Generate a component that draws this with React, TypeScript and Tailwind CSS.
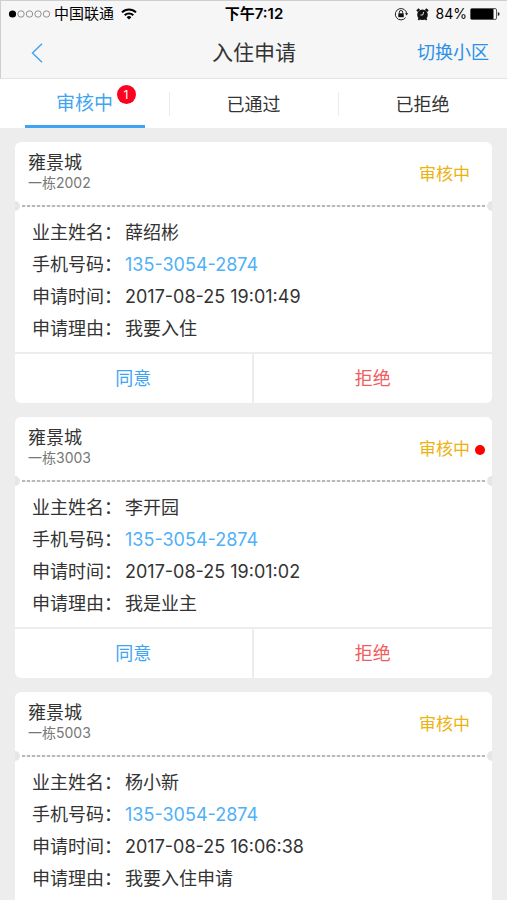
import React, { useState } from "react"

interface Application {
  id: number
  community: string
  room: string
  name: string
  phone: string
  time: string
  reason: string
  unread?: boolean
}

const tabs = [
  { id: "pending", name: "审核中", count: 1 },
  { id: "passed", name: "已通过", count: 0 },
  { id: "rejected", name: "已拒绝", count: 0 }
]

const applications: Application[] = [
  {
    id: 1,
    community: "雍景城",
    room: "一栋2002",
    name: "薛绍彬",
    phone: "135-3054-2874",
    time: "2017-08-25 19:01:49",
    reason: "我要入住"
  },
  {
    id: 2,
    community: "雍景城",
    room: "一栋3003",
    name: "李开园",
    phone: "135-3054-2874",
    time: "2017-08-25 19:01:02",
    reason: "我是业主",
    unread: true
  },
  {
    id: 3,
    community: "雍景城",
    room: "一栋5003",
    name: "杨小新",
    phone: "135-3054-2874",
    time: "2017-08-25 16:06:38",
    reason: "我要入住申请"
  }
]

// 手机状态栏
const StatusBar: React.FC = () => (
  <div className="grid h-[26px] grid-cols-[1fr_auto_1fr] items-center px-[7px] text-[15px] leading-5 text-black">
    <div className="flex items-center">
      <svg width="43" height="10" viewBox="0 0 43 10" className="mr-[3px]">
        <circle cx="4.5" cy="5" r="3.6" fill="#000" />
        {[13, 21.5, 30, 38.5].map((cx) => (
          <circle key={cx} cx={cx} cy="5" r="3.2" fill="none" stroke="#777" strokeWidth="0.8" />
        ))}
      </svg>
      <span>中国联通</span>
      <svg width="16" height="12" viewBox="0 0 16 12" className="ml-[7px]" fill="none" stroke="#000" strokeWidth="2">
        <path d="M1 4.4a10 10 0 0 1 14 0" />
        <path d="M3.7 7.2a6.1 6.1 0 0 1 8.6 0" />
        <path d="M8 11.6 5.6 9.2a3.4 3.4 0 0 1 4.8 0z" fill="#000" stroke="none" />
      </svg>
    </div>
    <span className="font-semibold">下午7:12</span>
    <div className="flex items-center justify-end text-[14px]">
      {/* 方向锁定 */}
      <svg width="14" height="14" viewBox="0 0 14 14" className="mr-2" fill="none" stroke="#222">
        <path d="M11.6 10.6A5.7 5.7 0 1 1 12.7 7" strokeWidth="1" />
        <path d="M11 6.3h3.2l-1.6 2.2z" fill="#222" stroke="none" />
        <rect x="4.3" y="6.3" width="5.4" height="3.9" fill="#111" stroke="none" />
        <path d="M5.3 6.5V5.2a1.7 1.7 0 0 1 3.4 0v1.3" strokeWidth="1" />
      </svg>
      {/* 闹钟 */}
      <svg width="13" height="13" viewBox="0 0 13 13" className="mr-[7px]">
        <circle cx="6.5" cy="6.8" r="5.3" fill="#111" />
        <path d="M1 3.2 3.4 1.2M12 3.2 9.6 1.2" stroke="#111" strokeWidth="2.2" />
        <path d="M3.4 10.6 2.4 12M9.6 10.6l1 1.4" stroke="#111" strokeWidth="1.8" />
        <path d="M7.6 3.9 6.8 7H4.4" stroke="#eee" strokeWidth="0.9" fill="none" />
      </svg>
      <span>84%</span>
      <svg width="30" height="12" viewBox="0 0 30 12" className="ml-[3px]">
        <rect x="0.5" y="0.5" width="26" height="11" rx="1.5" fill="none" stroke="#333" strokeWidth="0.8" />
        <rect x="1" y="1" width="22.5" height="10" fill="#000" />
        <path d="M27.8 4v4q1.8-.6 1.8-2t-1.8-2z" fill="#222" />
      </svg>
    </div>
  </div>
)

const Row: React.FC<{ label: string; children: React.ReactNode }> = ({ label, children }) => (
  <div className="flex gap-[3px]">
    <dt>{label}：</dt>
    <dd>{children}</dd>
  </div>
)

const ApplicationCard: React.FC<{ item: Application }> = ({ item }) => (
  <article className="shrink-0 overflow-hidden rounded-md bg-white">
    <div className="flex h-[63px] items-center justify-between pl-[13px]">
      <div className="pb-[6px]">
        <h2 className="text-[18px] leading-6">{item.community}</h2>
        <p className="text-[14px] leading-4 text-[#777]">{item.room}</p>
      </div>
      <div className="flex items-center pt-[3px] text-[17px] text-[#ecb210]">
        <span>审核中</span>
        <span className="flex w-[22px] justify-center pr-[2px]">
          {item.unread && (
            <span role="img" aria-label="未读" className="size-[10px] rounded-full bg-[#ff0000]" />
          )}
        </span>
      </div>
    </div>

    {/* 票据分割线 */}
    <div className="flex h-[2px] items-center justify-between">
      <span className="-ml-[5px] size-[10px] shrink-0 rounded-full bg-[#e6e6e6]" />
      <span className="mx-[2px] h-[2px] flex-1 bg-[repeating-linear-gradient(90deg,#b8b8b8_0_3px,#f2f2f2_3px_5px)]" />
      <span className="-mr-[5px] size-[10px] shrink-0 rounded-full bg-[#e6e6e6]" />
    </div>

    <dl className="px-[17px] pt-[10px] pb-[7px] text-[18px] leading-8">
      <Row label="业主姓名">{item.name}</Row>
      <Row label="手机号码">
        <a href={`tel:${item.phone}`} className="text-[#4fb0f8]">
          {item.phone}
        </a>
      </Row>
      <Row label="申请时间">
        <time>{item.time}</time>
      </Row>
      <Row label="申请理由">{item.reason}</Row>
    </dl>

    <div className="grid grid-cols-2 divide-x-2 divide-[#ededed] border-t-2 border-[#ededed] text-[18px]">
      <button type="button" className="h-[49px] text-[#3fa5f2]">
        同意
      </button>
      <button type="button" className="h-[49px] text-[#f05c5f]">
        拒绝
      </button>
    </div>
  </article>
)

const App: React.FC = () => {
  const [activeTab, setActiveTab] = useState("pending")

  return (
    <div className="flex h-screen flex-col bg-[#ededed] font-[Inter,'Noto_Sans_CJK_SC',sans-serif] text-[#333]">
      <header className="border-t border-l border-b border-t-[#cfcfcf] border-l-[#cfcfcf] border-b-[#e4e4e4] bg-[#f6f6f6]">
        <StatusBar />
        <div className="grid h-[51px] grid-cols-[1fr_auto_1fr] items-center px-[18px]">
          <button type="button" aria-label="返回" className="justify-self-start pl-[10px]">
            <svg width="16" height="20" viewBox="0 0 16 20" fill="none" stroke="#45a6f0" strokeWidth="1.5">
              <path d="M13 .8 3.5 10l9.5 9.2" />
            </svg>
          </button>
          <h1 className="text-[21px]">入住申请</h1>
          <a href="#switch" className="justify-self-end text-[18px] text-[#2b90e8]">
            切换小区
          </a>
        </div>
      </header>

      <nav className="grid h-[49px] shrink-0 grid-cols-3 bg-white">
        {tabs.map((tab) => (
          <button
            key={tab.id}
            type="button"
            onClick={() => setActiveTab(tab.id)}
            className="relative flex items-center justify-center not-first:before:absolute not-first:before:left-0 not-first:before:h-6 not-first:before:w-px not-first:before:bg-[#ebebeb]"
          >
            <span
              className={`relative flex h-full w-[120px] items-center justify-center border-b-3 pt-1 ${
                activeTab === tab.id
                  ? "border-b-[#3fa5f2] text-[19px] text-[#3fa5f2]"
                  : "border-b-transparent text-[18px]"
              }`}
            >
              {tab.name}
              {tab.count > 0 && (
                <span className="absolute top-[6px] right-[9px] flex size-[19px] items-center justify-center rounded-full bg-[#fb0220] text-[12px] leading-none text-white">
                  {tab.count}
                </span>
              )}
            </span>
          </button>
        ))}
      </nav>

      <main className="flex flex-1 flex-col gap-[14px] overflow-y-auto px-[15px] py-[14px] [scrollbar-width:none]">
        {applications.map((item) => (
          <ApplicationCard key={item.id} item={item} />
        ))}
      </main>
    </div>
  )
}

export default App
